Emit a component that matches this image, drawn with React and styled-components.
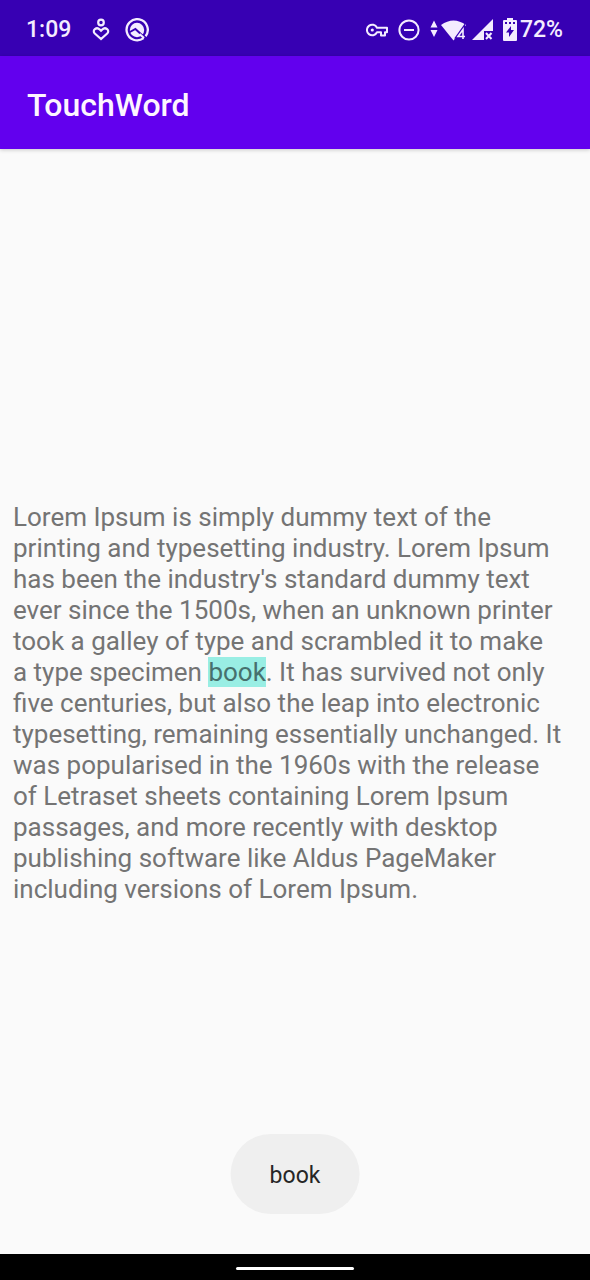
import React from "react";
import styled, { createGlobalStyle } from "styled-components";

const GlobalStyle = createGlobalStyle`
  * { box-sizing: border-box; }
  body {
    margin: 0;
    background: #fafafa;
    font-family: Roboto, "Liberation Sans", sans-serif;
  }
`;

const Screen = styled.div`
  position: relative;
  display: flex;
  flex-direction: column;
  min-height: 100vh;
`;

const StatusBar = styled.div`
  display: flex;
  align-items: center;
  justify-content: space-between;
  height: 56px;
  padding: 3px 27px 0 26px;
  background: #3700b3;
  color: #f4ecff;
  font-size: 23px;
  font-weight: 500;
  line-height: 28px;
`;

const StatusGroup = styled.div`
  display: flex;
  align-items: center;
  gap: ${(p) => p.$gap}px;

  svg {
    display: block;
    flex: none;
  }
`;

const AppBar = styled.header`
  display: flex;
  align-items: center;
  height: 93px;
  padding: 4px 27px 0;
  background: #6200ee;
  box-shadow: 0 1px 4px rgba(0, 0, 0, 0.2);
`;

const Title = styled.h1`
  margin: 0;
  color: #fdf5ff;
  font-size: 32px;
  font-weight: 500;
  line-height: 40px;
`;

const Content = styled.main`
  display: flex;
  flex: 1;
  flex-direction: column;
  justify-content: center;
  padding: 4px 13px 0;
`;

const Passage = styled.p`
  margin: 0;
  color: #747474;
  font-size: 26px;
  line-height: 31px;
`;

const Line = styled.span`
  display: block;
`;

const Highlight = styled.mark`
  background: #99eee4;
  color: #47706d;
`;

const Toast = styled.div`
  position: absolute;
  bottom: 66px;
  left: 50%;
  transform: translateX(-50%);
  padding: 28px 39px 24px;
  border-radius: 40px;
  background: #efefef;
  color: #262626;
  font-size: 23px;
  line-height: 28px;
`;

const NavBar = styled.footer`
  display: flex;
  align-items: center;
  justify-content: center;
  height: 26px;
  padding-top: 3px;
  background: #000;
`;

const HomeHandle = styled.div`
  width: 20%;
  height: 3px;
  border-radius: 2px;
  background: #fff;
`;

const lines = [
  "Lorem Ipsum is simply dummy text of the",
  "printing and typesetting industry. Lorem Ipsum",
  "has been the industry's standard dummy text",
  "ever since the 1500s, when an unknown printer",
  "took a galley of type and scrambled it to make",
  <>a type specimen <Highlight>book</Highlight>. It has survived not only</>,
  "five centuries, but also the leap into electronic",
  "typesetting, remaining essentially unchanged. It",
  "was popularised in the 1960s with the release",
  "of Letraset sheets containing Lorem Ipsum",
  "passages, and more recently with desktop",
  "publishing software like Aldus PageMaker",
  "including versions of Lorem Ipsum.",
];

const HeartPerson = () => (
  <svg width="18" height="24" viewBox="0 0 18 24" fill="none" stroke="currentColor" strokeWidth="2.2">
    <circle cx="9" cy="4.5" r="2.8" />
    <path d="M9 21 2.8 15.5C-.4 12.2 4.600 8.500 7.700 11.500L9 12.800l1.300-1.300c3.100-3 8.100.700 4.900 4Z" />
  </svg>
);

const CircleLogo = () => (
  <svg width="24" height="24" viewBox="0 0 24 24" fill="none">
    <path d="M18.6 20.2A10.6 10.6 0 1 1 20.6 18.2" stroke="currentColor" strokeWidth="2.3" />
    <circle cx="12" cy="12" r="7.2" fill="currentColor" />
    <path d="m4 14.500 6.400-3.600L18 18" stroke="#3700b3" strokeWidth="2" />
    <path d="m14.500 16 4.500 4" stroke="currentColor" strokeWidth="2.2" />
  </svg>
);

const VpnKey = () => (
  <svg width="22" height="14" viewBox="0 0 22 14" fill="none" stroke="currentColor" strokeWidth="2" strokeLinejoin="round">
    <path d="M11 4.700A5.300 5.300 0 1 0 11 9.300h4V12.500h4V9.300h2V4.700Z" />
    <circle cx="6.300" cy="7" r="1.600" fill="currentColor" stroke="none" />
  </svg>
);

const DoNotDisturb = () => (
  <svg width="22" height="22" viewBox="0 0 22 22" fill="none" stroke="currentColor" strokeWidth="2">
    <circle cx="11" cy="11" r="9.6" />
    <path d="M6 11h10" />
  </svg>
);

const Wifi = () => (
  <svg width="36" height="22" viewBox="0 0 36 22">
    <path d="m4 1.5 3.5 7h-7ZM.5 11h7L4 18Z" fill="currentColor" />
    <path d="M11 6Q23.5-3 36 6L23.5 21.5Z" fill="currentColor" />
    <path d="M33 20v-9.5l-5 7h7" fill="none" stroke="#3700b3" strokeWidth="4" />
    <path d="M33 20v-9.5l-5 7h7" fill="none" stroke="currentColor" strokeWidth="1.6" />
  </svg>
);

const MobileSignal = () => (
  <svg width="21" height="21" viewBox="0 0 21 21" fill="currentColor">
    <path d="M21 0v12h-9v9H0Z" />
    <path d="m14 14 5.5 6M19.500 14 14 20" fill="none" stroke="currentColor" strokeWidth="2" />
  </svg>
);

const Battery = () => (
  <svg width="14" height="23" viewBox="0 0 14 23" fill="currentColor">
    <path
      fillRule="evenodd"
      d="M4 0h6v2h3q1 0 1 1v19q0 1-1 1H1q-1 0-1-1V3q0-1 1-1h3ZM8 8l-5 6.500h3V19l5-7H8ZM2 4v2h2V4Zm4 0v2h2V4Zm4 0v2h2V4Z"
    />
  </svg>
);

export default function App() {
  return (
    <>
      <GlobalStyle />
      <Screen>
        <StatusBar>
          <StatusGroup $gap={21}>
            <span>1:09</span>
            <StatusGroup $gap={15}>
              <HeartPerson />
              <CircleLogo />
            </StatusGroup>
          </StatusGroup>
          <StatusGroup $gap={10}>
            <VpnKey />
            <DoNotDisturb />
            <StatusGroup $gap={6}>
              <Wifi />
              <MobileSignal />
            </StatusGroup>
            <StatusGroup $gap={3}>
              <Battery />
              <span>72%</span>
            </StatusGroup>
          </StatusGroup>
        </StatusBar>
        <AppBar>
          <Title>TouchWord</Title>
        </AppBar>
        <Content>
          <Passage>
            {lines.map((line, index) => (
              <Line key={index}>{line}</Line>
            ))}
          </Passage>
        </Content>
        <Toast role="status">book</Toast>
        <NavBar>
          <HomeHandle />
        </NavBar>
      </Screen>
    </>
  );
}
